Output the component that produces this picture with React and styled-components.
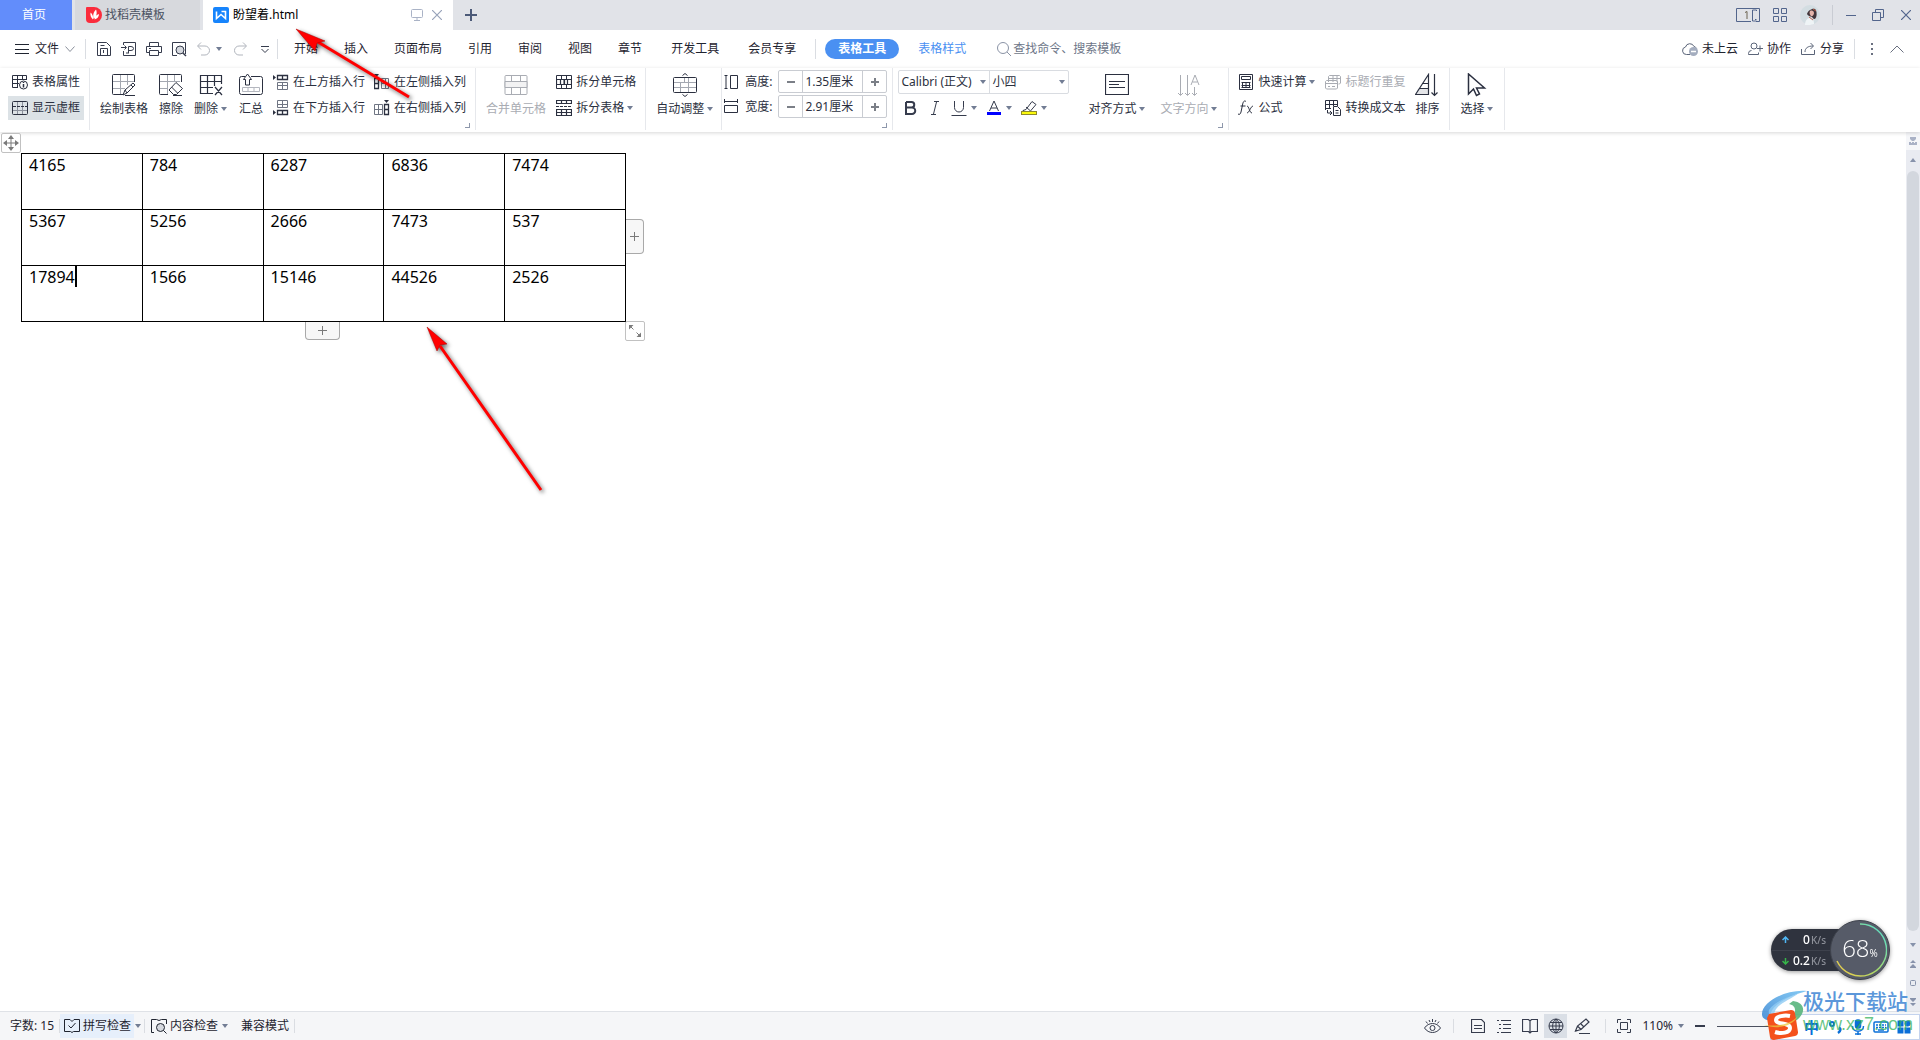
import React from 'react'
import styled, { createGlobalStyle, css } from 'styled-components'

const GlobalStyle = createGlobalStyle`
  * {
    box-sizing: border-box;
  }

  body {
    margin: 0;
    background: #fff;
    color: #1f2430;
    font: 12px/16px "Noto Sans", "Noto Sans CJK SC", sans-serif;
  }

  button, input, select {
    margin: 0;
    padding: 0;
    border: 0;
    background: none;
    color: inherit;
    font: inherit;
  }
`

const Svg = styled.svg`
  display: block;
  flex: none;
`

const Page = styled.div`
  position: relative;
  display: flex;
  flex-direction: column;
  height: 100vh;
  overflow: hidden;
`

const Row = styled.div`
  display: flex;
  align-items: center;
  gap: ${p => p.$gap || 0}px;
`

const IconButton = styled.button`
  display: flex;
  align-items: center;
  justify-content: center;
  gap: 3px;
  min-width: ${p => p.$width || 16}px;
  height: 24px;
  flex: none;
  color: ${p => p.$color || '#363c4d'};
  background: ${p => (p.$active ? '#dadfe6' : 'none')};
`

const Divider = styled.span`
  width: 1px;
  height: ${p => p.$height || 20}px;
  background: ${p => p.$color || '#dadde2'};
  flex: none;
`

/* tab strip */

const TabBar = styled.header`
  display: flex;
  align-items: center;
  height: 30px;
  background: #e1e3e8;
  flex: none;
`

const Tab = styled.button`
  display: flex;
  align-items: center;
  gap: 3px;
  height: 30px;
  padding: 0 11px;
  text-align: left;
  margin-right: 3px;
  width: ${p => p.$width}px;
  background: #d7d9dd;
  color: #4b5262;

  ${p => p.$home && css`
    padding-left: 22px;
    background: #628dfb;
    color: #fff;
  `}
`

const ActiveTab = styled.div`
  display: flex;
  align-items: center;
  gap: 4px;
  height: 30px;
  width: 250px;
  padding: 0 8px 0 10px;
  background: #fff;
  color: #000;
`

const Grow = styled.span`
  flex: 1;
`

const WindowControls = styled.div`
  display: flex;
  align-items: center;
  margin-left: auto;
  padding-right: 7px;
  gap: 12px;
`

/* menu row */

const MenuBar = styled.nav`
  display: flex;
  align-items: center;
  height: 38px;
  padding: 0 15px;
  flex: none;
`

const FileButton = styled.button`
  display: flex;
  align-items: center;
  gap: 6px;
  margin-right: 10px;
`

const QuickTools = styled.div`
  display: flex;
  align-items: center;
  gap: 9px;
  padding: 0 4px 0 10px;
`

const Menus = styled.div`
  display: flex;
  padding-right: 6px;
`

const MenuItem = styled.button`
  height: 20px;
  padding: 0 13px 0 ${p => (p.$wide ? 16 : 13)}px;
`

const MenuPill = styled.button`
  height: 20px;
  margin: 0 19px 0 9px;
  padding: 0 13px;
  border-radius: 10px;
  background: #4a90f2;
  color: #fff;
  font-weight: bold;
`

const StyleLink = styled.button`
  color: #4a90f2;
`

const Search = styled.label`
  display: flex;
  align-items: center;
  gap: 2px;
  margin-left: 31px;
  color: #8a93a5;

  input {
    width: 150px;
    outline: none;
  }

  input::placeholder {
    color: #6d7688;
    opacity: 1;
  }
`

const MenuRight = styled.div`
  display: flex;
  align-items: center;
  gap: 10px;
  margin-left: auto;
`

const LinkButton = styled.button`
  display: flex;
  align-items: center;
  gap: 4px;
`

/* ribbon */

const Ribbon = styled.section`
  position: relative;
  display: flex;
  height: 64px;
  flex: none;
  box-shadow: 0 1px 4px rgba(0, 0, 0, 0.16);
  color: #2b3040;
`

const Group = styled.div`
  position: relative;
  display: flex;
  gap: 1px;
  height: 62px;
  padding: 0 ${p => p.$right || 5}px 0 ${p => p.$left || 5}px;
  border-right: 1px solid #e6e8ec;
`

const Corner = styled.span`
  position: absolute;
  right: 5px;
  bottom: 2px;
  width: 5px;
  height: 5px;
  border: solid #8d97ab;
  border-width: 0 1px 1px 0;
`

const Stack = styled.div`
  display: flex;
  flex-direction: column;
  gap: 2px;
  padding-top: 2px;
`

const BigButton = styled.button`
  display: flex;
  flex-direction: column;
  align-items: center;
  gap: 4px;
  padding: 5px 5px 0;
  height: 56px;
  white-space: nowrap;
  color: ${p => (p.disabled ? '#a9acb3' : 'inherit')};

  span {
    display: flex;
    align-items: center;
    gap: 2px;
  }
`

const SmallButton = styled.button`
  display: flex;
  align-items: center;
  gap: 4px;
  height: 24px;
  padding: 0 4px;
  white-space: nowrap;
  color: ${p => (p.disabled ? '#a9acb3' : 'inherit')};
  background: ${p => (p.$active ? '#dce2e6' : 'none')};
`

const CaretSpace = styled.span`
  margin-left: -2px;
`

const StepperRow = styled.label`
  display: flex;
  align-items: center;
  gap: 6px;
`

const Stepper = styled.div`
  display: flex;
  width: 109px;
  height: 23px;
  border: 1px solid #c9ccd2;
  border-radius: 2px;

  button {
    display: flex;
    align-items: center;
    justify-content: center;
    width: 23px;
    color: #7b7f87;
  }

  input {
    flex: 1;
    min-width: 0;
    padding-left: 2px;
    border: solid #c9ccd2;
    border-width: 0 1px;
  }
`

const FontColumn = styled(Stack)`
  margin-right: 13px;
`

const FontBoxes = styled.div`
  display: flex;
  width: 171px;
  height: 24px;
  border: 1px solid #d9dce1;
  border-radius: 2px;
`

const SelectBox = styled.div`
  display: flex;
  align-items: center;
  flex: ${p => p.$grow};
  min-width: 0;
  padding: 0 2px;

  & + & {
    border-left: 1px solid #d9dce1;
  }

  select {
    appearance: none;
    flex: 1;
    min-width: 0;
    outline: none;
  }
`

const FontTools = styled.div`
  display: flex;
  align-items: center;
  gap: 2px;
  height: 24px;
  padding-left: 5px;
`

const TextButtons = styled.div`
  display: flex;
  gap: 4px;
`

/* document */

const Workspace = styled.main`
  display: flex;
  flex: 1;
  min-height: 0;
`

const Paper = styled.div`
  flex: 1;
  padding: 21px 0 0 21px;
`

const TableWrap = styled.div`
  position: relative;
  width: max-content;
`

const Grid = styled.table`
  border-collapse: collapse;
  table-layout: fixed;
  width: 605px;
  color: #000;
  font-family: "Noto Sans", sans-serif;
  font-size: 16px;
  line-height: 22px;

  td {
    height: 56px;
    padding: 0 7px;
    border: 1px solid #000;
    vertical-align: top;
  }
`

const TextCaret = styled.span`
  display: inline-block;
  width: 2px;
  height: 21px;
  background: #000;
  vertical-align: top;
`

const Handle = styled.button`
  position: absolute;
  display: flex;
  align-items: center;
  justify-content: center;
  width: 20px;
  height: 20px;
  border: 1px solid #c1c1c1;
  border-radius: 2px;
  background: #fff;
  color: #7a7a7a;

  ${p => p.$at === 'move' && css`
    left: -20px;
    top: -20px;
  `}

  ${p => p.$at === 'resize' && css`
    left: calc(100% - 1px);
    top: calc(100% - 1px);
  `}

  ${p => p.$at === 'row' && css`
    left: 284px;
    top: 100%;
    width: 35px;
    height: 18px;
    border-top: 0;
    border-radius: 0 0 4px 4px;
    border-color: #a9a9a9;
    background: #f7f7f7;
  `}

  ${p => p.$at === 'column' && css`
    left: 100%;
    top: 66px;
    width: 18px;
    height: 35px;
    border-left: 0;
    border-radius: 0 4px 4px 0;
    border-color: #a9a9a9;
    background: #f7f7f7;
  `}
`

const Scrollbar = styled.div`
  display: flex;
  flex-direction: column;
  align-items: center;
  width: 14px;
  background: #e9ebf1;
  color: #8792ab;

  button {
    display: flex;
    align-items: center;
    justify-content: center;
    width: 14px;
    height: 19px;
    flex: none;
  }

  button:first-child {
    height: 18px;
    background: #f5f6f9;
  }
`

const Thumb = styled.div`
  flex: 1;
  width: 12px;
  margin: 2px 0 4px;
  border-radius: 6px;
  background: #d3d7de;
`

/* status bar */

const StatusBar = styled.footer`
  display: flex;
  align-items: center;
  height: 29px;
  flex: none;
  border-top: 1px solid #dfe2e7;
  background: #f5f6f8;
`

const StatusText = styled.span`
  padding: 0 5px 0 ${p => p.$left}px;
`

const StatusButton = styled.button`
  display: flex;
  align-items: center;
  gap: 3px;
  height: 24px;
  padding: 0 3px 0 4px;
  background: ${p => (p.$active ? '#e6effb' : 'none')};
`

const StatusRight = styled.div`
  display: flex;
  align-items: center;
  margin-left: auto;
  padding-right: 83px;
`

const ZoomSlider = styled.input`
  appearance: none;
  width: 120px;
  height: 1px;
  margin-left: 9px;
  background: #4b5160;

  &::-webkit-slider-thumb {
    appearance: none;
    width: 6px;
    height: 12px;
    background: #4b5160;
  }
`

/* floating parts */

const Arrows = styled.svg`
  position: absolute;
  left: 0;
  top: 0;
  pointer-events: none;
  filter: drop-shadow(2px 2px 2px rgba(0, 0, 0, 0.6));
`

const NetWidget = styled.aside`
  position: absolute;
  right: 30px;
  bottom: 60px;
  display: flex;
  align-items: center;
  filter: drop-shadow(0 1px 2px rgba(0, 0, 0, 0.4));
`

const Speeds = styled.div`
  width: 77px;
  margin-right: -18px;
  border-radius: 21px 0 0 21px;
  background: #2f333e;
  color: #fff;
`

const Speed = styled.div`
  display: flex;
  align-items: center;
  height: 21px;
  padding: 0 22px 0 11px;
  font-weight: 500;

  & + & {
    border-top: 1px solid #3d414c;
  }

  small {
    margin-left: 1px;
    color: #8d9099;
    font-size: 10px;
  }
`

const Gauge = styled.div`
  display: grid;
  place-items: center;
  width: 60px;
  height: 60px;
  border: 1px solid #3f434d;
  border-radius: 50%;
  background: #565b68;
  color: #fff;

  > * {
    grid-area: 1 / 1;
  }

  span {
    font-family: "Open Sans", sans-serif;
    font-size: 24px;
    font-weight: 300;
    line-height: 28px;
  }

  small {
    font-size: 10px;
    font-weight: 400;
  }
`

const ImeBar = styled.div`
  position: absolute;
  right: 0;
  bottom: 0;
  display: flex;
  align-items: center;
  gap: 8px;
  width: 150px;
  height: 26px;
  padding: 0 5px 0 33px;
  border: 1px solid #c4d3ee;
  background: #fff;
  color: #0a6fd8;
  font-size: 15px;
  font-weight: bold;
`

const Watermark = styled.div`
  position: absolute;
  right: 9px;
  bottom: 0;
  display: flex;
  align-items: flex-start;
  width: 150px;
  height: 52px;
  pointer-events: none;
`

const SiteName = styled.div`
  flex: none;
  margin-left: -6px;
  color: #5b97da;
  font-size: 21px;
  font-weight: 500;
  line-height: 26px;
  white-space: nowrap;

  small {
    display: block;
    color: rgba(52, 178, 92, 0.75);
    font-family: "Liberation Sans", Arial, sans-serif;
    font-size: 18px;
    line-height: 20px;
  }
`

const Icon = ({ w = 16, h = 16, children, ...rest }) => (
  <Svg
    width={w}
    height={h}
    viewBox={`0 0 ${w} ${h}`}
    fill="none"
    stroke="currentColor"
    aria-hidden="true"
    {...rest}
  >
    {children}
  </Svg>
)

const Caret = () => (
  <Icon w={8} h={8}>
    <path d="M1 2h6L4 6z" fill="#727d94" stroke="none" />
  </Icon>
)

const Plus = ({ size = 9, width = 1 }) => (
  <Icon w={size} h={size} strokeWidth={width}>
    <path d={`M0 ${size / 2}h${size}M${size / 2} 0v${size}`} />
  </Icon>
)

const icons = {
  shell: (
    <Icon>
      <path d="M1 0h7a8 8 0 0 1 0 16H4a4 4 0 0 1-4-4V1a1 1 0 0 1 1-1z" fill="#fb2c3c" stroke="none" />
      <path d="M10 2.500c-3 3-3 6-2.500 9.500 3-2 4-6 2.500-9.500zM4.500 5.500c-.5 3 .5 5 2.500 7 .5-3-.5-5.500-2.500-7zM13 7c-2.500.5-4 2.500-4.500 5.500C11 12 13 10 13 7z" fill="#fff" stroke="none" />
    </Icon>
  ),
  wps: (
    <Icon>
      <rect width="16" height="16" rx="2" fill="#1684fc" stroke="none" />
      <path d="M3.500 4.500v7L8 7.500l4.500 4v-7H8.500" stroke="#fff" strokeWidth="1.600" />
    </Icon>
  ),
  monitor: (
    <Icon w={12} h={12} stroke="#aab3c6">
      <path d="M1.500.5h9a1 1 0 0 1 1 1v6a1 1 0 0 1-1 1h-9a1 1 0 0 1-1-1v-6a1 1 0 0 1 1-1zM6 8.500V11M3 11.500h6" />
    </Icon>
  ),
  close: <Icon w={10} h={10}><path d="M0 0l10 10M10 0L0 10" strokeWidth="1.200" /></Icon>,
  burger: <Icon w={14} h={12}><path d="M0 1.500h14M0 6.500h14M0 10.500h14" /></Icon>,
  chevron: <Icon w={10} h={8} stroke="#8a909c"><path d="M.5 1.500l4.500 5 4.500-5" /></Icon>,
  save: <Icon><path d="M1.500 1.500h9l4 4v9h-13zM4.500 14V7.500h7V14M4.500 4.500h4M7.500 9v3" /></Icon>,
  pdf: <Icon><path d="M2.500 4V1.500h12v13h-12V10M0 6.500h5M3.500 4.500l2 2-2 2M7.500 12V5.500h2.500a2.500 2 0 0 1 0 4H7.500M5 12h3" /></Icon>,
  print: <Icon><path d="M3.500 5V1.500h9V5M3.500 11.500h-3v-6h15v6h-3M3.500 9.500h9v5h-9zM3 7.500h2" /></Icon>,
  preview: (
    <Icon>
      <path d="M6 14.500H1.500v-13h13V13" />
      <circle cx="9" cy="9" r="4" fill="#d5d8de" />
      <path d="M12 12l3 3" strokeWidth="1.500" />
    </Icon>
  ),
  undo: <Icon stroke="#b1b5bd"><path d="M5 1.500L1.500 5 5 8.500M2 5h7a4.500 4.500 0 0 1 0 9H5" /></Icon>,
  redo: <Icon stroke="#b1b5bd"><path d="M11 1.500L14.500 5 11 8.500M14 5H7a4.500 4.500 0 0 0 0 9h4" /></Icon>,
  more: <Icon><path d="M4 5.500h8M4.500 8l3.500 3.500L11.500 8" /></Icon>,
  search: <Icon w={14} h={14}><circle cx="6" cy="6" r="5.500" /><path d="M10 10l4 4" /></Icon>,
  cloud: (
    <Icon stroke="#5a6478">
      <path d="M8 13.500H4.500A3.800 3.800 0 0 1 3.500 6 4.500 4.500 0 0 1 12 5.500c1.500.5 2 1 2.500 2" />
      <circle cx="11.500" cy="10.500" r="4.500" fill="#a4adbf" stroke="none" />
      <path d="M9 10.500h5" stroke="#fff" strokeWidth="1.500" />
    </Icon>
  ),
  person: <Icon w={15} stroke="#5a6478"><circle cx="6" cy="5" r="3" /><path d="M3.500 9.500a3 3 0 0 0-3 3v1h10v-2M12 4.500v6M9 7.500h6" /></Icon>,
  share: <Icon w={15} stroke="#5a6478"><path d="M.5 8v5.500h13V9M4 11c0-4 3-6 8-6M9.500 2l3 3-3 3" /></Icon>,
  dots: <Icon w={4} h={14} stroke="none" fill="#6a7080"><path d="M1 1h2v2H1zM1 6h2v2H1zM1 11h2v2H1z" /></Icon>,
  up: <Icon w={14} h={8} stroke="#6a7080"><path d="M.5 7.500L7 1l6.500 6.500" /></Icon>,
  windows: <Icon w={24} h={14}><path d="M15 13.500H.5V.5h23v13H20M20.500 3v-1h-4v11h4M19 11.500h1.500" /><path d="M9 4.500l2-1V11" stroke="#6b6350" /></Icon>,
  apps: <Icon w={14} h={14}><path d="M.5.5h5v5h-5zM8.500.5h5v5h-5zM.5 8.500h5v5h-5zM8.500 8.500h5v5h-5z" /></Icon>,
  avatar: (
    <Icon w={20} h={20} stroke="none">
      <circle cx="10" cy="10" r="10" fill="#d3dde2" />
      <path d="M7 9c1-4 7-7 9-4 1 3 1 7-1 9-2 0-2-1-3-2-2-1-4-1-5-3z" fill="#42353a" />
      <path d="M10 6c2-1 4 0 4 2s-2 4-3 3-2-3-1-5z" fill="#e3b4aa" />
      <path d="M5 20c0-4 2-7 5-7s4 3 4 6c-3 1-6 1.500-9 1z" fill="#eff4f6" />
      <path d="M9 12l4 3M13 4l3 2" stroke="#b8614d" />
    </Icon>
  ),
  minimize: <Icon w={10} h={10}><path d="M0 5.500h10" /></Icon>,
  restore: <Icon w={12} h={12}><path d="M.5 3.500h8v8h-8zM3.500 3V.5h8v8H9" /></Icon>,
  props: (
    <Icon>
      <path d="M6 13.500H.5v-12h14V6M1 5.500h13M1 9.500h6M5.500 2v11M10.500 2v4" />
      <circle cx="11.500" cy="11" r="4" fill="#fff" />
      <path d="M11.500 10v3.500M11.500 8v1" strokeWidth="1.500" />
    </Icon>
  ),
  dashed: (
    <Icon>
      <rect x=".5" y="1.500" width="15" height="13" rx="1" />
      <path d="M1 10.500h14M5.500 2v12M10.500 2v12" stroke="#8a909c" />
      <path d="M1 6.500h14" strokeDasharray="3 1" />
    </Icon>
  ),
  draw: (
    <Icon w={24} h={24}>
      <path d="M1 8.500h21M1 15.500h12M8.500 2v19M15.500 2v10" stroke="#a4a8b1" />
      <path d="M11 21.500H1.500a1 1 0 0 1-1-1v-18a1 1 0 0 1 1-1h20a1 1 0 0 1 1 1V9M11 22l2-5 8-7 2 2-8 8zM19 12l2 2M13 17l2 3M13 22.500h10" />
    </Icon>
  ),
  erase: (
    <Icon w={24} h={24}>
      <path d="M1 8.500h20M1 15.500h8M8.500 2v19M15.500 2v7" stroke="#a4a8b1" />
      <path d="M9 21.500H1.500a1 1 0 0 1-1-1v-18a1 1 0 0 1 1-1h20a1 1 0 0 1 1 1V9M17 9.500l6.500 6-6 6h-3L10 17zM12.500 14l6 6M14 22.500h9" />
    </Icon>
  ),
  remove: <Icon w={24} h={24}><path d="M22.500 11V2.500M1 2.500h22M1.500 2v19M1 8.500h21M1 14.500h13M1 20.500h13M8.500 2v19M15.500 2v11M16 14l7 8M23 14l-7 8" strokeWidth="1.200" /></Icon>,
  total: (
    <Icon w={24} h={24}>
      <path d="M6 3.500H2.500a2 2 0 0 0-2 2v14a2 2 0 0 0 2 2h19a2 2 0 0 0 2-2v-14a2 2 0 0 0-2-2H12" />
      <path d="M3.500 14.500h17v4h-17zM9 14.500v4M15 14.500v4" stroke="#b4b7bf" />
      <path d="M6.500 12V6.500H4.500L8.500 1l4 5.500H10.500V12z" fill="#fff" />
    </Icon>
  ),
  above: <Icon><path d="M0 1l3 2.500L0 6z" fill="currentColor" stroke="none" /><path d="M4.500 1.500h10v4h-10zM9.500 1v5" strokeWidth="1.300" /><path d="M4.500 8.500h10v7h-10zM5 11.500h9M9.500 8v7" stroke="#6f7583" /></Icon>,
  below: <Icon><path d="M0 10l3 2.500L0 15z" fill="currentColor" stroke="none" /><path d="M4.500 10.500h10v4h-10zM9.500 10v5" strokeWidth="1.300" /><path d="M4.500.5h10v7h-10zM5 4.500h9M9.500 1v7" stroke="#6f7583" /></Icon>,
  left: <Icon><path d="M0 0h5L2.500 3z" fill="currentColor" stroke="none" /><path d="M.5 4.500h4v10h-4zM1 9.500h4" strokeWidth="1.300" /><path d="M7.500 4.500h7v10h-7zM8 9.500h7M11.500 5v9" stroke="#6f7583" /></Icon>,
  right: <Icon><path d="M10 0h5l-2.500 3z" fill="currentColor" stroke="none" /><path d="M10.500 4.500h4v10h-4zM10 9.500h4" strokeWidth="1.300" /><path d="M.5 4.500h8v10h-8zM1 9.500h7M4.500 5v9" stroke="#6f7583" /></Icon>,
  merge: <Icon w={24} h={24}><path d="M2 2.500h20a1 1 0 0 1 1 1v17a1 1 0 0 1-1 1H2a1 1 0 0 1-1-1v-17a1 1 0 0 1 1-1zM7.500 3v5M16.500 3v5M7.500 15v6M16.500 15v6" /><path d="M1 8.500h22v6H1z" fill="#f2f2f3" /></Icon>,
  splitCell: <Icon><path d="M.5 1.500h15v13H.5zM5.500 2v3M10.500 2v3M5.500 11v3M10.500 11v3M8 5v6" /><path d="M.5 5.500h15v5H.5zM4.500 5v6M8.500 5v6M11.500 5v6" strokeWidth="1.200" /></Icon>,
  splitTable: <Icon><path d="M.5 4V.500h15V4M.5 3.500h15M5.500 0v4M10.500 0v4M.5 9.500h15v6H.5zM.5 12.500h15M5.500 9v6M10.500 9v6" strokeWidth="1.200" /><path d="M0 6.500h16" strokeDasharray="3 1" /></Icon>,
  auto: (
    <Icon w={24} h={24}>
      <path d="M1 9.500h22M1 14.500h22M7.500 10v9M15.500 5v14M11.500 5v4" stroke="#a4a8b1" />
      <path d="M1.500 4.500h21a1 1 0 0 1 1 1v13a1 1 0 0 1-1 1h-21a1 1 0 0 1-1-1v-13a1 1 0 0 1 1-1zM9.500 2.500L12 .5l2.500 2M9.500 21.500l2.500 2 2.500-2" />
    </Icon>
  ),
  height: <Icon w={15}><path d="M.5 1.500h3M2 1.500v13M.5 14.500h3M6.500 1.500h7v13h-7z" /></Icon>,
  width: <Icon w={15}><path d="M.5 0v4M.5 2.500h13M13.500 0v4M.5 6.500h13v7H.5z" /></Icon>,
  align: <Icon w={24} h={24}><path d="M.5 1.500h23v20H.5zM4 8.500h16M4 11.500h10M4 14.500h16" strokeWidth="1.200" /></Icon>,
  direction: <Icon w={24} h={24}><path d="M3.500 2v20M1 20l2.500 2.500L6 20M10.500 2v20M8 20l2.500 2.500L13 20M17.500 14v8M15 20l2.500 2.500L20 20M14 12l4-10 4 10M15.500 9h5" /></Icon>,
  calc: <Icon><path d="M1.500.5h13v15h-13zM3.500 2.500h9v3h-9zM3.500 8.500h9M3.500 11.500h9M4.500 8v6M8 8v6M11.500 8v6M3.500 13.500h9" /></Icon>,
  fx: <Icon><path d="M8 1.500C6 0 5 2 4.500 5L3 12c-.5 2-1.500 3-3 2M2.500 6h5M9 6c2 0 2.500 7 5 7M15 6c-2 0-4 7-6 7" /></Icon>,
  repeat: <Icon><path d="M3.500 8V2.500l1-1h10l1 1V9l-1 1h-1M4 4.500h11M8 2v6M12 2v6M.5 7.500l1-1h10l1 1V14l-1 1h-10l-1-1zM1 9.500h11M3 12.500h2M7 12.500h3" /></Icon>,
  convert: <Icon><path d="M.5 10V.5h12V6M1 4.500h11M1 8.500h5M4.500 1v8M8.500 1v5M2.500 10v3h4M5 11l2 2-2 2M8.500 6.500h4l3 3v6h-7zM10.500 10.500h3M10.500 13h3" /></Icon>,
  sort: <Icon w={24} h={24}><path d="M3 15.500h10.500v6H.5z" fill="#e4e5e8" stroke="none" /><path d="M13.500 1.500v20H.5zM7 10.500h6.500M4 15.500h9.500M19.500 1v21M16.500 19.500l3 3 3-3" strokeWidth="1.200" /></Icon>,
  cursor: <Icon w={20} h={24}><path d="M1.500 1v20l5-5 3 6.500 3-1.500-3-6h8z" strokeWidth="1.500" /></Icon>,
  highlighter: <Icon><path d="M2 10.500l3-1 6-8 4 3-6 7H2zM5 7l4 3.500" /><rect x=".5" y="11.500" width="15" height="3" fill="#fbf90c" stroke="#8f8a2b" /></Icon>,
  bold: <Icon><path d="M3 2v12h6a3 3 0 0 0 0-6.500H3M3 2h5.500a2.700 2.700 0 0 1 0 5.500" strokeWidth="2" /></Icon>,
  italic: <Icon><path d="M7 1.500h5M4 14.500h5M9.500 2l-3 12" /></Icon>,
  underline: <Icon><path d="M3.500 1v6.500a4.500 4.500 0 0 0 9 0V1M.5 15.500h15" /></Icon>,
  fontColor: <Icon><path d="M3.500 11L8 1l4.500 10M5 8h6" /><path d="M1 13.500h14" stroke="#0000ff" strokeWidth="3" /></Icon>,
  move: <Icon w={16} h={16}><path d="M8 2v12M2 8h12" /><path d="M8 0l3 4H5zM8 16l3-4H5zM0 8l4-3v6zM16 8l-4-3v6z" fill="currentColor" stroke="none" /></Icon>,
  resize: <Icon w={14} h={14}><path d="M2 2l3.500 3.500M8.500 8.500L12 12" /><path d="M1 1h4.500L1 5.500zM13 13H8.500L13 8.500z" fill="currentColor" stroke="none" /></Icon>,
  spell: <Icon><path d="M6 1.500H.5v12h6l1.500 1 1.500-1h6v-12H10M6 1.500l2 2 2-2M4.500 7.500L7 10l4.500-5" /></Icon>,
  content: <Icon><path d="M3 14.500H.5v-13h5l2.500 1 2.500-1h5V6" /><circle cx="9.500" cy="9.500" r="4" fill="#d5d8de" /><path d="M12.500 12.500l3 3" /></Icon>,
  eye: <Icon w={17}><path d="M.5 10c4-6 12-6 16 0-4 6-12 6-16 0zM2 3.500l1.500 2M8.500 1v3M15 3.500l-1.500 2M5 2l1 2M12 2l-1 2" /><circle cx="8.500" cy="10" r="2.500" /></Icon>,
  page: <Icon w={14}><path d="M.5 1.500h10l3 3v10H.5zM3 7.500h8M3 10.500h8" strokeWidth="1.200" /></Icon>,
  outline: <Icon><path d="M1 2.500h2M5 2.500h10M3 6.500h2M7 6.500h8M3 10.500h2M7 10.500h8M1 14.500h2M5 14.500h10" strokeWidth="1.200" /></Icon>,
  book: <Icon><path d="M.5 1.500h6L8 3l1.500-1.500h6v12h-6L8 15l-1.500-1.500h-6zM8 3v12" strokeWidth="1.200" /></Icon>,
  globe: <Icon><circle cx="8" cy="8" r="7" /><path d="M8 1v14M1 8h14M2 4.500h12M2 11.500h12M8 1C3.500 4 3.500 12 8 15M8 1c4.500 3 4.500 11 0 14" /></Icon>,
  pen: <Icon><path d="M1.500 13l2-5 8.500-7 3 3-8 7.500zM3.500 8L7 11.500M7 6l3 3M5 15.500h11" strokeWidth="1.200" /></Icon>,
  fit: <Icon><path d="M1.500 5V1.500H5M11 1.500h3.500V5M14.500 11v3.500H11M5 14.500H1.500V11M4.500 4.500h7v7h-7z" /></Icon>
}

function ToolButton ({ icon, label, caret, ...rest }) {
  return (
    <SmallButton {...rest}>
      {icons[icon]}
      {label}
      {caret && <CaretSpace><Caret /></CaretSpace>}
    </SmallButton>
  )
}

function LargeButton ({ icon, label, caret, ...rest }) {
  return (
    <BigButton {...rest}>
      {icons[icon]}
      <span>{label}{caret && <Caret />}</span>
    </BigButton>
  )
}

function SizeField ({ icon, label, value }) {
  return (
    <StepperRow>
      {icons[icon]}
      {label}
      <Stepper>
        <button aria-label="减少"><Icon w={8} h={8}><path d="M0 4h8" strokeWidth="2" /></Icon></button>
        <input aria-label={label} defaultValue={value} />
        <button aria-label="增加"><Plus size={8} width={2} /></button>
      </Stepper>
    </StepperRow>
  )
}

const menus = ['开始', '插入', '页面布局', '引用', '审阅', '视图', '章节', '开发工具', '会员专享']

const rows = [
  ['4165', '784', '6287', '6836', '7474'],
  ['5367', '5256', '2666', '7473', '537'],
  ['17894', '1566', '15146', '44526', '2526']
]

function Header () {
  return (
    <TabBar>
      <Tab $home $width={72}>首页</Tab>
      <Tab $width={125}>{icons.shell}找稻壳模板</Tab>
      <ActiveTab>
        {icons.wps}
        盼望着.html
        <Grow />
        <IconButton aria-label="窗口">{icons.monitor}</IconButton>
        <IconButton aria-label="关闭标签" $color="#98a3ba">{icons.close}</IconButton>
      </ActiveTab>
      <IconButton $width={36} $color="#4c5a78" aria-label="新建"><Plus size={12} width={2} /></IconButton>
      <WindowControls>
        <IconButton $color="#52658c" aria-label="标签列表">{icons.windows}</IconButton>
        <IconButton $color="#52658c" aria-label="应用">{icons.apps}</IconButton>
        <IconButton aria-label="账户">{icons.avatar}</IconButton>
        <Divider $color="#c9ccd3" />
        <Row $gap={14}>
          <IconButton $width={12} $color="#52658c" aria-label="最小化">{icons.minimize}</IconButton>
          <IconButton $width={14} $color="#52658c" aria-label="还原">{icons.restore}</IconButton>
          <IconButton $width={14} $color="#52658c" aria-label="关闭">{icons.close}</IconButton>
        </Row>
      </WindowControls>
    </TabBar>
  )
}

function Menu () {
  return (
    <MenuBar>
      <FileButton>{icons.burger}文件 {icons.chevron}</FileButton>
      <Divider />
      <QuickTools>
        <IconButton aria-label="保存">{icons.save}</IconButton>
        <IconButton aria-label="输出为PDF">{icons.pdf}</IconButton>
        <IconButton aria-label="打印">{icons.print}</IconButton>
        <IconButton aria-label="打印预览">{icons.preview}</IconButton>
        <IconButton aria-label="撤销">{icons.undo}<Caret /></IconButton>
        <IconButton aria-label="恢复">{icons.redo}</IconButton>
        <IconButton aria-label="更多">{icons.more}</IconButton>
      </QuickTools>
      <Divider />
      <Menus>
        {menus.map((name, i) => <MenuItem key={name} $wide={i > 6 || i === 0}>{name}</MenuItem>)}
      </Menus>
      <Divider />
      <MenuPill>表格工具</MenuPill>
      <StyleLink>表格样式</StyleLink>
      <Search>
        {icons.search}
        <input aria-label="搜索" placeholder="查找命令、搜索模板" />
      </Search>
      <MenuRight>
        <LinkButton>{icons.cloud}未上云</LinkButton>
        <LinkButton>{icons.person}协作</LinkButton>
        <LinkButton>{icons.share}分享</LinkButton>
        <Divider />
        <IconButton $width={14} aria-label="更多选项">{icons.dots}</IconButton>
        <IconButton aria-label="收起功能区">{icons.up}</IconButton>
      </MenuRight>
    </MenuBar>
  )
}

function Tools () {
  return (
    <Ribbon>
      <Group $left={8}>
        <Stack>
          <ToolButton icon="props" label="表格属性" />
          <ToolButton icon="dashed" label="显示虚框" $active />
        </Stack>
      </Group>
      <Group>
        <LargeButton icon="draw" label="绘制表格" />
        <LargeButton icon="erase" label="擦除" />
        <LargeButton icon="remove" label="删除" caret />
        <LargeButton icon="total" label="汇总" />
        <Stack>
          <ToolButton icon="above" label="在上方插入行" />
          <ToolButton icon="below" label="在下方插入行" />
        </Stack>
        <Stack>
          <ToolButton icon="left" label="在左侧插入列" />
          <ToolButton icon="right" label="在右侧插入列" />
        </Stack>
        <Corner />
      </Group>
      <Group>
        <LargeButton icon="merge" label="合并单元格" disabled />
        <Stack>
          <ToolButton icon="splitCell" label="拆分单元格" />
          <ToolButton icon="splitTable" label="拆分表格" caret />
        </Stack>
      </Group>
      <Group $right={2}>
        <LargeButton icon="auto" label="自动调整" caret />
      </Group>
      <Group $left={2}>
        <Stack>
          <SizeField icon="height" label="高度:" value="1.35厘米" />
          <SizeField icon="width" label="宽度:" value="2.91厘米" />
        </Stack>
        <Corner />
      </Group>
      <Group>
        <FontColumn>
          <FontBoxes>
            <SelectBox $grow="0 0 90px">
              <select aria-label="字体"><option>Calibri (正文)</option></select>
              <Caret />
            </SelectBox>
            <SelectBox $grow={1}>
              <select aria-label="字号"><option>小四</option></select>
              <Caret />
            </SelectBox>
          </FontBoxes>
          <FontTools>
            <IconButton aria-label="加粗">{icons.bold}</IconButton>
            <IconButton $width={28} aria-label="倾斜">{icons.italic}</IconButton>
            <Row $gap={8}>
              <IconButton aria-label="下划线">{icons.underline}<Caret /></IconButton>
              <IconButton aria-label="字体颜色">{icons.fontColor}<Caret /></IconButton>
              <IconButton aria-label="突出显示">{icons.highlighter}<Caret /></IconButton>
            </Row>
          </FontTools>
        </FontColumn>
        <TextButtons>
          <LargeButton icon="align" label="对齐方式" caret />
          <LargeButton icon="direction" label="文字方向" caret disabled />
        </TextButtons>
        <Corner />
      </Group>
      <Group>
        <Stack>
          <ToolButton icon="calc" label="快速计算" caret />
          <ToolButton icon="fx" label="公式" />
        </Stack>
        <Stack>
          <ToolButton icon="repeat" label="标题行重复" disabled />
          <ToolButton icon="convert" label="转换成文本" />
        </Stack>
        <LargeButton icon="sort" label="排序" />
      </Group>
      <Group>
        <LargeButton icon="cursor" label="选择" caret />
      </Group>
    </Ribbon>
  )
}

function Document () {
  return (
    <Workspace>
      <Paper>
        <TableWrap>
          <Grid>
            <tbody>
              {rows.map((row, i) => (
                <tr key={i}>
                  {row.map(value => (
                    <td key={value}>{value}{value === '17894' && <TextCaret />}</td>
                  ))}
                </tr>
              ))}
            </tbody>
          </Grid>
          <Handle $at="move" aria-label="移动表格">{icons.move}</Handle>
          <Handle $at="resize" aria-label="调整大小">{icons.resize}</Handle>
          <Handle $at="row" aria-label="添加行"><Plus /></Handle>
          <Handle $at="column" aria-label="添加列"><Plus /></Handle>
        </TableWrap>
      </Paper>
      <Scrollbar>
        <button aria-label="标尺"><Icon w={8} h={8} stroke="none" fill="#aab2c6"><path d="M1 0h6v2L5 4H3L1 2zM0 5h2v1h1V5h2v1h1V5h2v3H0z" /></Icon></button>
        <button aria-label="向上滚动"><Icon w={6} h={4} stroke="none" fill="currentColor"><path d="M0 4l3-4 3 4z" /></Icon></button>
        <Thumb />
        <button aria-label="向下滚动"><Icon w={6} h={4} stroke="none" fill="currentColor"><path d="M0 0h6L3 4z" /></Icon></button>
        <button aria-label="上一页"><Icon w={6} h={8} stroke="none" fill="currentColor"><path d="M0 3l3-3 3 3zM0 7l3-3 3 3v1H0z" /></Icon></button>
        <button aria-label="选择浏览对象"><Icon w={6} h={6}><rect x=".5" y=".5" width="5" height="5" rx="1" /></Icon></button>
        <button aria-label="下一页"><Icon w={6} h={8} stroke="none" fill="currentColor"><path d="M0 0h6v1L3 4 0 1zM0 5h6L3 8z" /></Icon></button>
      </Scrollbar>
    </Workspace>
  )
}

function Status () {
  return (
    <StatusBar>
      <StatusText $left={10}>字数: 15</StatusText>
      <Divider $height={14} />
      <StatusButton $active>{icons.spell}拼写检查</StatusButton>
      <Caret />
      <Row $gap={2}>
        <span />
        <Divider $height={14} />
        <StatusButton>{icons.content}内容检查</StatusButton>
      </Row>
      <Caret />
      <StatusText $left={12}>兼容模式</StatusText>
      <Divider $height={14} />
      <StatusRight>
        <Row $gap={12}>
          <IconButton aria-label="护眼模式">{icons.eye}</IconButton>
          <Divider $height={14} />
          <Row $gap={3}>
            <IconButton $width={23} aria-label="页面视图">{icons.page}</IconButton>
            <IconButton $width={23} aria-label="大纲">{icons.outline}</IconButton>
            <IconButton $width={23} aria-label="阅读版式">{icons.book}</IconButton>
            <IconButton $width={23} $active aria-label="Web版式">{icons.globe}</IconButton>
            <IconButton $width={23} aria-label="写作模式">{icons.pen}</IconButton>
          </Row>
          <Divider $height={14} />
        </Row>
        <Row $gap={7}>
          <span />
          <IconButton $width={22} aria-label="最佳显示比例">{icons.fit}</IconButton>
          <LinkButton>110%<Caret /></LinkButton>
          <IconButton aria-label="缩小"><Icon w={10} h={10}><path d="M0 5h10" strokeWidth="2" /></Icon></IconButton>
        </Row>
        <ZoomSlider type="range" aria-label="显示比例" min="10" max="200" defaultValue="110" />
      </StatusRight>
    </StatusBar>
  )
}

function NetworkMeter () {
  return (
    <NetWidget>
      <Speeds>
        <Speed>
          <Icon w={7} h={7} stroke="#4fb7f5" strokeWidth="1.500"><path d="M3.500 7V1M.5 4l3-3 3 3" /></Icon>
          <Grow />0<small>K/s</small>
        </Speed>
        <Speed>
          <Icon w={7} h={7} stroke="#36b449" strokeWidth="1.500"><path d="M3.500 0v6M.5 3l3 3 3-3" /></Icon>
          <Grow />0.2<small>K/s</small>
        </Speed>
      </Speeds>
      <Gauge>
        <Icon w={54} h={54} strokeWidth="1.500">
          <defs>
            <linearGradient id="load" x1="0" y1="1" x2="1" y2="0">
              <stop offset="0" stopColor="#f6c945" />
              <stop offset=".45" stopColor="#a9dc6c" />
              <stop offset="1" stopColor="#4fdcd8" />
            </linearGradient>
          </defs>
          <path d="M27 1a26 26 0 1 1-23 37" stroke="url(#load)" />
        </Icon>
        <span>68<small>%</small></span>
      </Gauge>
    </NetWidget>
  )
}

function InputMethod () {
  return (
    <ImeBar>
      中
      <Icon w={16} h={14}><circle cx="5" cy="4" r="2" strokeWidth="2" /><path d="M12 8c2 0 2 3-1 5" strokeWidth="2.500" /></Icon>
      <Icon w={14} h={16} strokeWidth="1.500"><rect x="4.500" y="1" width="5" height="8" rx="2" fill="currentColor" /><path d="M1.500 7c0 7 11 7 11 0M7 12v4M4 15h6" /></Icon>
      <Icon w={16} h={12} strokeWidth="1.500"><rect x="1" y="1" width="14" height="10" rx="1" /><path d="M3 4h10M3 6.500h10" strokeDasharray="2 1" /><path d="M5 9h6" /></Icon>
      <Icon w={14} h={14} fill="currentColor"><rect x="1" y="1" width="5" height="5" /><rect x="8" y="1" width="5" height="5" rx="2" /><rect x="1" y="8" width="5" height="5" /><rect x="8" y="8" width="5" height="5" /></Icon>
    </ImeBar>
  )
}

function SiteMark () {
  return (
    <Watermark>
      <Icon w={48} h={52} stroke="none">
        <defs>
          <linearGradient id="sky" x1="0" y1="1" x2="1" y2="0">
            <stop offset="0" stopColor="#3583d2" />
            <stop offset="1" stopColor="#6ec0f2" />
          </linearGradient>
        </defs>
        <path d="M46 3C26 1 1 13 1 26c0 5 4 6 10 7C5 24 16 11 46 3z" fill="url(#sky)" opacity=".85" />
        <path d="M8 22c5-8 16-12 30-17-9 7-20 10-24 18-1 3-1 6-1 8-4-2-6-5-5-9z" fill="#8fcbf2" opacity=".8" />
        <path d="M32 13c9 1 12 7 9 13-4 8-15 12-32 13 14-4 24-8 25-15 .5-4-1-7-6-8z" fill="#58b57c" opacity=".9" />
        <path d="M8 26l22-4a4 4 0 0 1 4 3l3 19a4 4 0 0 1-3 4l-21 4a4 4 0 0 1-4-3L6 30z" fill="#f4511c" />
        <path d="M29 28c-5-1-14 0-14 4 0 5 14 2 14 8 0 5-9 6-15 4" fill="none" stroke="#fff" strokeWidth="4" />
        <path d="M3 37c14 2 27-1 34-9-5 10-20 14-34 9z" fill="#ecc83f" opacity=".75" />
      </Icon>
      <SiteName>极光下载站<small>www.xz7.com</small></SiteName>
    </Watermark>
  )
}

export default function App () {
  return (
    <Page>
      <GlobalStyle />
      <Header />
      <Menu />
      <Tools />
      <Document />
      <Status />
      <Arrows width="600" height="520" viewBox="0 0 600 520" fill="#f00" stroke="#f00">
        <path d="M318 42L409 97M440 346L541 490" strokeWidth="3" />
        <path d="M296 29l29 12-8 2-2 8zM427 327l20 17-7 1-3 6z" stroke="#a00" strokeWidth=".5" />
      </Arrows>
      <NetworkMeter />
      <InputMethod />
      <SiteMark />
    </Page>
  )
}
